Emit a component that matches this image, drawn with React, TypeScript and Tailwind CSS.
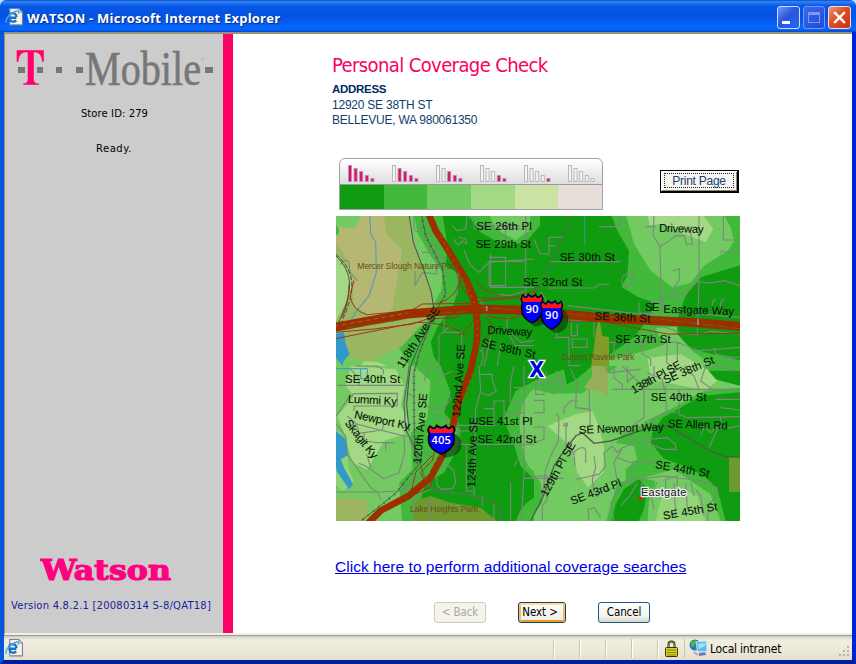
import type { ReactNode } from "react";

const SANS = "font-['Liberation_Sans',sans-serif]";
const VERDANA = "font-['DejaVu_Sans',sans-serif]";
const TAHOMA = "font-['DejaVu_Sans_Condensed','DejaVu_Sans',sans-serif]";

function IePage({ className }: { className?: string }) {
  return (
    <svg viewBox="0 0 17 17" className={className}>
      <path d="M4.500 .5H13l3.500 3.500v12h-12z" fill="#f6f3e2" stroke="#6b7fae" />
      <path d="M13 .5V4h3.500M6 15.500h9.500" fill="none" stroke="#a4a087" />
      <path d="M10.800 9.200H4.200c.1 4 4 4.600 6.400 2.600M3.800 8.400C4 3.800 10.800 3.600 10.800 8.400" fill="none" stroke="#1971cf" strokeWidth="2.200" />
      <path d="M1.500 14C-1 12 4.500 4.500 11 2.800c2-.5 2.200.8 1.400 2.400" fill="none" stroke="#43a5ee" strokeWidth="1.300" />
    </svg>
  );
}

function TMobileLogo() {
  return (
    <svg viewBox="0 -10 206 66" className="ml-[10px] h-[66px] w-[206px] shrink-0 overflow-visible">
      <g fill="#777">
        <rect x="8.500" y="19" width="7" height="6" />
        <rect x="27.500" y="19" width="6" height="6" />
        <rect x="46.500" y="19" width="6" height="6" />
        <rect x="66.500" y="19" width="6.500" height="6" />
        <rect x="195" y="19" width="8" height="6" />
      </g>
      <path d="M1.500 2h27.500v12h-2c-.5-6-2.500-9.500-7-9.500h-1V31c0 3 1 4.300 5 4.500V37H8v-1.500c3.500-.2 4.500-1.500 4.500-4.500V4.500h-2C6 4.500 4 8 3.500 14h-2z" transform="translate(0 0)" fill="#ff006c" stroke="#d9cbd1" strokeWidth=".4" />
      <text x="75" y="36.500" fontFamily="Liberation Serif, serif" fontSize="48" fill="#777" stroke="#777" strokeWidth=".5" textLength="116" lengthAdjust="spacingAndGlyphs">Mobile</text>
      <circle cx="190" cy="13" r="1" fill="none" stroke="#999" strokeWidth=".4" />
    </svg>
  );
}

function TitleBar() {
  return (
    <header className="flex h-8 shrink-0 items-center rounded-t-[6px] bg-[linear-gradient(#0842b5_0,#2a83f4_4%,#2575f3_9%,#0758e6_18%,#0551e0_50%,#0563fa_80%,#0567ff_92%,#0645cc_100%)] pl-[5px] pr-[5px]">
      <IePage className="mt-px h-[18px] w-[18px]" />
      <span className="ml-[4px] mt-[3px] whitespace-nowrap font-['Open_Sans',sans-serif] text-[13px] font-bold leading-4 tracking-[0.22px] text-white [text-shadow:1px_1px_1px_#102880]">WATSON - Microsoft Internet Explorer</span>
      <div className="ml-auto mt-0.5 flex gap-[3px]">
        <span className="flex h-[23px] w-[23px] items-end rounded-[3px] border border-[#cbdcff] bg-[linear-gradient(135deg,#749af6,#2856dc_45%,#2467ee)] pb-1 pl-[4px]">
          <i className="h-[3px] w-2 bg-white" />
        </span>
        <span className="flex h-[23px] w-[22px] items-center justify-center rounded-[3px] border border-[#7198f4] bg-[linear-gradient(135deg,#3b68e7,#1e4bdb)]">
          <i className="h-[11px] w-3 border border-t-[3px] border-[#7b98ed]" />
        </span>
        <span className="flex h-[23px] w-[23px] items-center justify-center rounded-[3px] border border-[#f4dcda] bg-[linear-gradient(135deg,#ee957e,#df4c24_45%,#c73510)]">
          <svg viewBox="0 0 14 14" className="h-[15px] w-[15px]"><path d="M2 2l10 10M12 2L2 12" stroke="white" strokeWidth="2.300" /></svg>
        </span>
      </div>
    </header>
  );
}

function Sidebar() {
  return (
    <aside className="flex w-[228px] shrink-0 flex-col border-r-[10px] border-[#ff0066] bg-[#cccccc] pt-1">
      <div className="-ml-[5px]"><div className="pl-[5px]"><TMobileLogoFrame /></div></div>
      <div className={`mt-[2px] pl-px text-center text-[10px] leading-4 tracking-[0.1px] text-black ${VERDANA}`}>Store ID: 279</div>
      <div className={`mt-[19px] text-center text-[10px] leading-4 tracking-[0.5px] text-black ${VERDANA}`}>Ready.</div>
      <svg viewBox="0 0 136 36" className="ml-[35px] mt-auto h-9 w-[136px]">
        <text x="1" y="27.500" fontFamily="DejaVu Serif, serif" fontWeight="bold" fontSize="28" fill="#ff0080" stroke="#ff0080" strokeWidth="1.200" textLength="130" lengthAdjust="spacingAndGlyphs">Watson</text>
      </svg>
      <div className={`mb-[19px] mt-[10px] whitespace-nowrap pl-[6px] text-[10px] leading-4 tracking-[0.210px] text-[#1c1c9c] ${VERDANA}`}>Version 4.8.2.1 [20080314 S-8/QAT18]</div>
    </aside>
  );
}

function TMobileLogoFrame() {
  return (
    <svg viewBox="0 -10 212 66" className="ml-[10px] h-[66px] w-[212px] shrink-0 overflow-visible">
      <g fill="#777">
        <rect x="3" y="19" width="7" height="6" />
        <rect x="22" y="19" width="6" height="6" />
        <rect x="41" y="19" width="6" height="6" />
        <rect x="61" y="19" width="7" height="6" />
        <rect x="190" y="19" width="8" height="6" />
      </g>
      <path d="M1.500 2h27.500v12h-2c-.5-6-2.500-9.500-7-9.500h-1V31c0 3 1 4.300 5 4.500V37H8v-1.500c3.500-.2 4.500-1.500 4.500-4.500V4.500h-2C6 4.500 4 8 3.500 14h-2z" fill="#ff006c" stroke="#d9cbd1" strokeWidth=".4" />
      <text x="70" y="36.500" fontFamily="Liberation Serif, serif" fontSize="48" fill="#777" stroke="#777" strokeWidth=".6" textLength="116" lengthAdjust="spacingAndGlyphs">Mobile</text>
      <circle cx="187.500" cy="11" r="1" fill="none" stroke="#999" strokeWidth=".4" />
    </svg>
  );
}

const LEGEND = ["bg-[#109c10]", "bg-[#42b93a]", "bg-[#73c962]", "bg-[#a3d885]", "bg-[#cbe2a4]", "bg-[#e7ded9]"];
const BAR_HEIGHTS = [16, 13, 10, 6, 3];

function SignalLegend() {
  return (
    <div className="h-[52px] w-[264px] overflow-hidden rounded-t-[6px] border-[1.500px] border-[#a2a2a2] bg-[linear-gradient(#fff,#ddd_52%)]">
      <svg viewBox="0 0 262 25" className="h-[25px] w-[262px]">
        {LEGEND.map((_, level) =>
          BAR_HEIGHTS.map((h, bar) => {
            const filled = bar >= level;
            return (
              <rect key={`${level}-${bar}`} x={8.500 + level * 44 + bar * 5.600} y={22.500 - h} width="3" height={h} fill={filled ? "#dd0872" : "#f3f3f3"} stroke={filled ? "#b399a7" : "#b4b4b4"} strokeWidth=".9" />
            );
          }),
        )}
      </svg>
      <div className="flex h-[25px] border-t border-[#999]">
        {LEGEND.map((color) => <span key={color} className={`flex-1 ${color}`} />)}
      </div>
    </div>
  );
}

function Terrain() {
  return (
    <>
      <rect width="1224" height="930" fill="#109c10" />
      <g>
        <path d="M0 0H325L340 90 335 155 375 180 370 230 360 270 310 340 290 385 300 430 320 456H0z" fill="#42b93a" />
        <path d="M0 0H240L252 60 290 125 325 175 322 230 293 280 275 330 210 360 195 400 225 456H0z" fill="#73c962" />
        <path d="M90 0H222L250 110 295 240 285 295 270 325 205 395 110 440 40 430 30 360 0 350 0 45 30 52 60 48z" fill="#9cb560" />
        <path d="M0 35L60 45 85 0H148L158 60 205 108 175 285 130 320 60 275 55 190 30 120 0 80z" fill="#b5b872" />
        <path d="M0 120C45 150 65 210 40 260L0 330z" fill="#a3d885" />
        <path d="M0 30C20 40 20 65 0 65z" fill="#42b93a" />
        <path d="M80 456L90 442 130 443 160 456z" fill="#a3d885" />
        <path d="M400 0L440 55 510 95 575 85 618 35V0z" fill="#42b93a" />
        <path d="M465 0L485 45 545 78 585 50 590 0z" fill="#73c962" />
        <path d="M0 360L30 355 35 390 47 420 30 440 25 456 5 430z" fill="#3099ca" />
      </g>
      <g transform="translate(600 0)">
        <path d="M230 0L250 50 285 110 280 185 262 218 310 248 365 268 335 325 300 370 230 420 180 470H624V440L470 405 425 360 430 315 455 245 500 190 624 152V0z" fill="#42b93a" />
        <path d="M275 0L300 90 350 170 415 220 470 207 510 155 582 110 600 80 590 40 568 0z" fill="#73c962" />
        <path d="M340 0L347 34 380 30 450 60 515 85 538 45 505 0z" fill="#a3d885" />
        <path d="M365 342L430 338 430 360 480 415 540 456H180C230 430 320 420 395 390L375 365z" fill="#73c962" />
        <path d="M195 310L205 365 225 370 225 456H172L188 340z" fill="#829c2a" />
        <path d="M152 0V94" stroke="#3e90a0" strokeWidth="3" />
      </g>
      <g transform="translate(0 456)">
        <path d="M0 0H320L350 80 330 140 375 190 370 250 330 320 275 350 240 465H0z" fill="#42b93a" />
        <path d="M0 0H240L290 45 280 160 230 200 235 310 195 350 205 465H0z" fill="#73c962" />
        <path d="M50 0L35 60 60 90 10 150 30 200 55 290 100 310 150 225 210 205 225 165 200 120 212 60 185 10z" fill="#a3d885" />
        <path d="M0 185L22 205 25 250 40 265 45 310 60 345 25 375 0 350z" fill="#a3d885" opacity=".6" />
        <path d="M0 190L35 220 42 268 20 280 30 305 57 355 45 370 8 315 0 255z" fill="#3099ca" />
        <path d="M0 8H100V38H80V8" fill="none" stroke="#3099ca" strokeWidth="3" />
        <path d="M600 45L545 75 508 160 535 220 560 300 600 340 670 390 740 300 690 10z" fill="#42b93a" />
        <path d="M600 70C555 100 550 180 565 240C570 290 585 310 610 320z" fill="#73c962" />
        <path d="M0 395L98 400 107 465H0z" fill="#9cb560" />
        <path d="M235 465L240 405 290 390 350 410 440 425 495 470z" fill="#6e992f" />
        <path d="M545 470C560 410 600 390 640 380V470z" fill="#42b93a" />
      </g>
      <g transform="translate(600 456)">
        <path d="M180 0H390L620 60V465H0V68L55 78 120 62z" fill="#73c962" />
        <path d="M0 60L60 72 120 45 175 0H250L145 82 55 83 0 70z" fill="#42b93a" />
        <path d="M624 65L510 75 410 130 335 172 265 205 245 230 300 240 310 280 275 310 275 350 420 310 485 355 530 385 560 465H624z" fill="#42b93a" />
        <path d="M624 78L500 90 440 125 385 155 355 200 350 230 390 278 450 300 510 330 550 368 575 465H624z" fill="#109c10" />
        <path d="M250 350L315 335 365 345 345 405 340 470H215z" fill="#42b93a" />
        <path d="M315 338L340 370 330 430 312 470H232L245 415 270 370z" fill="#109c10" />
        <path d="M350 465L370 370 425 330 480 360 525 400 545 470z" fill="#73c962" />
        <path d="M365 465L385 380 440 365 490 390 515 465z" fill="#a3d885" opacity=".7" />
        <path d="M40 180L125 145 175 135 195 180 210 245 208 320 162 364 130 320 108 240z" fill="#a3d885" />
        <path d="M340 -25L440 -35 520 10 550 45 515 72 460 62 350 40z" fill="#a3d885" />
        <path d="M172 0H220L222 90 200 78 150 65 175 30z" fill="#98ad57" />
        <path d="M585 275H624V378H585z" fill="#6e992f" />
        <path d="M0 325L20 350 25 410 0 445z" fill="#42b93a" />
      </g>
    </>
  );
}

function MinorRoads() {
  return (
    <g fill="none" stroke="#7b887b" strokeWidth="3.300">
      <path d="M107 0L110 60 125 85 127 175 105 245 65 295 48 325" stroke="#5b98ad" />
      <path d="M18 152Q35 130 45 145L48 175 70 200M240 0V45Q255 65 265 40V5M265 115H285V95H308V180L265 175 243 215V172M320 290H330V355H383V440M370 245V180M400 0L395 45 370 50 355 35M360 75Q370 105 385 80Q405 100 395 75L375 70M390 108L410 155 435 175 465 145 600 135M465 130H515V215H465V142H568M420 0V45H600M515 20V85M575 0V260M435 35H560M470 120V220H600M330 180V130H300M265 75L285 60 320 75M420 240L455 280V310M520 310L518 350 545 395H600M480 240L525 245 570 232M440 456Q455 420 440 410L465 390M315 456V365L350 335M470 372L450 456M500 390L490 456M530 356L560 385 600 380" />
      <g transform="translate(600 0)">
        <path d="M110 0L108 20 20 215 0 235" stroke="#526c52" />
        <path d="M0 75L18 120H45V70H85M45 95H65M195 38H255L262 0M50 143H260M335 38H365M360 0L358 65 378 97 382 295M378 97L400 85 425 65 450 65 458 92 475 90 470 55M495 0L495 205 490 360M568 0V78H618M560 118Q560 105 575 115H618M275 220L263 205 265 190 290 170 300 180 295 205 275 220M415 170 437 165 435 200 420 220 422 245M382 295L385 248 440 245 465 225 490 203 530 207 570 200 618 215M40 222H180L195 212 225 210M315 265V290L320 298H360M350 265H380V300M535 285V265L545 255M560 290V265L570 255M20 235L45 270M67 320V370H105V455H140M110 320H180V370M112 328V365H130V330M115 375V400H160V375H110M180 320L365 330 450 360 490 362 530 352 618 360M362 335V385M225 385H430L495 410 618 400M240 385V435M285 390L280 440M320 385L325 420 350 435 350 456M400 385 398 445 415 460M430 385V440M540 400L545 420 590 430H618M595 430V456M100 275L360 305M440 295L618 310" />
      </g>
      <g transform="translate(0 456)">
        <path d="M10 58H210M50 10L75 38V58M65 0H130L148 12V25M0 160L40 100 60 83 190 82V120M60 135V120H190M0 165L35 210 40 265 110 365 130 378 200 375 260 330M40 150L70 175 210 210 212 260 195 320 150 338 95 300 75 292M35 175 70 182 75 202 145 192 150 170M90 200V225L120 228M155 230V255M120 230H182M98 265L110 305M205 210H225L235 245 265 255 285 270 280 300M0 378H130L140 400M285 0 270 45M310 0L325 30 355 15M340 70 350 100 330 125 300 130 275 120M210 75L235 90M300 150H335L340 180M355 150Q385 180 375 230L360 250M370 178H480V128H450M370 195H425M370 235H600M435 0L440 75 425 130 420 390M440 25H475V45L487 75 465 88 440 80M397 235V375H420M345 300H315L305 320 310 360 325 370 355 368 365 350 360 315 345 300M540 0L530 45 528 105H550V130M540 65H568M570 0V105L570 320M510 140H570M510 210H590M555 275L540 300M570 320L562 465M480 125V105H510V165M480 465V415M530 350V465M570 337H690M240 465L235 405 265 380 290 370M290 400V465M445 390V420M200 350L225 375" />
        <path d="M225 0L222 30 210 110 215 190 245 250 275 345 305 375 400 385 470 405 500 430V465" stroke="#587458" strokeWidth="4" />
      </g>
      <g transform="translate(600 456)">
        <path d="M35 15L40 50 75 45 65 12M0 50H30V85H5V50M110 10 128 50 125 125 168 130V185M0 103H30V140H0M55 85 60 63 85 65V25M166 70V135M90 145V125L110 105H130M66 142 75 155 73 225 50 270 35 310 25 390M96 170V240L120 260 123 300M90 170V180H100V170M115 265Q140 235 155 250L155 290M0 183H30V220L0 230M0 330H40V400L25 420V465M128 340 195 325 215 300 210 260 235 240M180 380 175 340 185 305 180 270M265 0 315 50 330 55V155L300 175 270 200M235 70H618M360 0V45M330 90V70M393 60 398 135M435 70V145L460 155 618 152M330 170 400 135 430 140M235 240 250 260 265 245 340 220 400 215 425 235 425 250 390 250 350 235 340 215M290 215V235M250 345 240 290 265 245M250 275 290 290 320 285 370 290M240 465 230 410 270 350 310 340 390 330 500 345 550 365 548 390 525 415 520 465M275 350 290 330 295 295M310 350 290 385 260 420M325 345 320 380M370 350 350 380 360 430M395 370V340L430 330V360M420 350 425 450M455 350 460 430M470 350 480 390M485 370 500 390 510 450M165 465 162 430 180 425 200 455M190 395V380L240 365M485 180H510L530 200 550 180M555 180 525 245M510 185 500 210M560 155V190L618 180M545 100H618M560 125 618 132M450 0 480 30 495 70M515 0 500 45 535 70M530 0 618 15M210 0 225 20 320 10M240 0V35L265 55V70M280 0V50M300 30 280 50M340 20 385 40 390 70" />
        <path d="M-10 465L28 390 60 300 90 255 125 210 145 200 180 232 230 225 345 185 400 180 445 205 530 255 575 272H624" stroke="#505b50" strokeWidth="4" />
      </g>
    </g>
  );
}

function Highways() {
  return (
    <>
      <g fill="none" stroke="#484d48" strokeWidth="3">
        <path d="M225 0L238 85 270 170 292 235 300 290 280 345 255 395 230 456 225 490 218 570 225 650M0 120C65 180 55 235 12 330" />
        <path d="M262 0L275 65 325 165 335 240 300 300 255 420 240 475 240 590 242 710 252 755 185 838 82 920" stroke="#575e57" />
        <path d="M262 0L275 65 325 165 335 240 300 300 255 420 240 475 240 590 242 710 252 755 185 838 82 920" strokeWidth="8" strokeDasharray="2 18" />
        <path d="M5 120C72 180 63 235 20 330" strokeDasharray="14 6" />
      </g>
      <g fill="none" stroke="#9b3817" strokeWidth="3">
        <path d="M25 310Q45 265 45 210M60 200L48 245Q55 290 100 302L230 290 265 270 420 268M0 355L120 345 235 330 280 315 370 310 390 285M345 95Q390 180 410 268M355 120Q370 210 405 250 560 260 605 225M380 180Q380 245 310 270M425 200Q440 230 500 245M425 310Q405 345 375 365M400 370Q355 325 250 325L0 375M450 305Q500 340 440 385M460 305Q525 325 570 300L650 310M0 345Q100 320 220 300L410 275 620 285M435 260 580 250 610 230M270 800L260 775 295 740 305 695M230 840 245 775 295 725M245 840 290 820 295 770M600 320 800 322 1000 360 1218 358" />
      </g>
      <g fill="none" stroke="#9c2e00">
        <path d="M0 340L110 320 220 300 410 285 550 288 850 315 1070 325 1224 337" strokeWidth="27" />
        <path d="M284 0L305 50 350 120 395 195 420 250 430 330 428 385 410 470 375 560 355 640 325 725 290 790 225 845 140 890 100 930" strokeWidth="20" />
        <path d="M0 337L110 317 220 297" stroke="#819246" strokeWidth="2" strokeDasharray="15 9" />
        <path d="M430 279 600 292 840 310M440 303 700 305M40 342 200 318M280 300 400 293M940 311 1218 344" stroke="#5a7719" strokeWidth="2" strokeDasharray="32 10" />
        <path d="M320 65 410 240 428 280 431 400M415 480 345 680 280 790 195 850" stroke="#c75e29" strokeWidth="2" strokeDasharray="8 12" />
      </g>
      <circle cx="425" cy="285" r="17" fill="#9c2e00" />
      <path d="M458 276v16M1092 315v18" stroke="#8991a0" strokeWidth="5" />
    </>
  );
}

function Shield({ x, y, route, scale = 1 }: { x: number; y: number; route: string; scale?: number }) {
  return (
    <g transform={`translate(${x} ${y})`}>
      <g transform={`scale(${scale} 1)`}>
        <path d="M-14 -25Q50 -28 49 15Q49 52 8 55L-20 30z" fill="#052e05" opacity=".55" />
        <path d="M-28-40L-20-33Q-14-33-11-42Q0-30 11-42Q14-33 20-33L28-40L33-28 29-17Q40 25 0 44Q-40 25-29-17L-33-28z" fill="#0000f6" stroke="#000" strokeWidth="4" />
        <path d="M-28-36L-20-30Q-13-29-11-37Q0-26 11-37Q13-29 20-30L28-36 30-27 27-19H-27L-30-27z" fill="#ff1515" />
      </g>
      <text x="0" y="14" textAnchor="middle" fontFamily="DejaVu Sans, sans-serif" fontSize="31" fill="white" stroke="white" strokeWidth=".7">{route}</text>
    </g>
  );
}

type MapLabel = [text: string, x: number, y: number, width: number, angle?: number];

const STREETS: MapLabel[] = [
  ["SE 26th Pl", 427, 49, 166],
  ["SE 29th St", 425, 103, 166],
  ["SE 30th St", 677, 142, 166],
  ["SE 32nd St", 568, 217, 177],
  ["Driveway", 975, 53, 133, 2],
  ["Driveway", 460, 359, 134, 3],
  ["SE 38th St", 440, 397, 166, 13],
  ["SE", 933, 291, 43],
  ["Eastgate Way", 988, 296, 212, 2],
  ["SE 36th St", 781, 317, 168, 3],
  ["SE 37th St", 844, 388, 166],
  ["118th Ave SE", 206, 464, 208, -57],
  ["122nd Ave SE", 378, 610, 219, -86],
  ["120th Ave SE", 261, 749, 211, -85],
  ["124th Ave SE", 423, 820, 210, -88],
  ["SE 40th St", 33, 508, 166],
  ["Lummi Ky", 41, 566, 147, 3],
  ["Newport Ky", 59, 612, 171, 12],
  ["Skagit Ky", 31, 628, 138, 52],
  ["SE 41st Pl", 433, 633, 162],
  ["SE 42nd St", 431, 688, 176],
  ["138th Pl SE", 899, 540, 166, -29],
  ["SE 38th St", 994, 510, 162, -23],
  ["SE 40th St", 950, 562, 168],
  ["SE Newport Way", 735, 659, 254, -2],
  ["SE Allen Rd", 1001, 640, 180, 2],
  ["129th Pl SE", 638, 850, 181, -61],
  ["SE 43rd Pl", 715, 873, 160, -21],
  ["SE 44th St", 962, 762, 164, 10],
  ["SE 45th St", 989, 917, 165, -10],
];

const PARKS: MapLabel[] = [
  ["Mercer Slough Nature Park", 70, 165, 304],
  ["Sunset Ravine Park", 682, 439, 219],
  ["Lake Heights Park", 228, 894, 204],
];

function CoverageMap() {
  return (
    <svg viewBox="6 6 1212 915" className="mt-[6px] ml-1 h-[305px] w-[404px] shrink-0">
      <Terrain />
      <MinorRoads />
      <Highways />
      <g fontFamily="Liberation Sans, sans-serif" fontSize="26" fill="#6c4a20">
        {PARKS.map(([text, x, y, width]) => <text key={text} x={x} y={y} textLength={width}>{text}</text>)}
      </g>
      <g fontFamily="Liberation Sans, sans-serif" fontSize="34" fill="#071407" stroke="#071407" strokeWidth=".3">
        {STREETS.map(([text, x, y, width, angle = 0]) => (
          <text key={`${text}-${x}`} x={x} y={y} textLength={width} transform={`rotate(${angle} ${x} ${y})`}>{text}</text>
        ))}
      </g>
      <Shield x={594} y={283} route="90" />
      <Shield x={653} y={302} route="90" />
      <Shield x={322} y={676} route="405" scale={1.23} />
      <text x="586" y="490" fontFamily="DejaVu Sans Condensed, DejaVu Sans, sans-serif" fontSize="64" fill="#0000e8" stroke="white" strokeWidth="8" paintOrder="stroke" textLength="45" lengthAdjust="spacingAndGlyphs" fontWeight="bold">X</text>
      <circle cx="920" cy="853" r="6" fill="#ff1010" />
      <text x="921" y="847" fontFamily="Liberation Sans, sans-serif" fontSize="33" fill="#101010" stroke="#eee" strokeWidth="7" strokeLinejoin="round" paintOrder="stroke" textLength="136">Eastgate</text>
    </svg>
  );
}

function XpButton({ children, variant = "normal" }: { children: ReactNode; variant?: "normal" | "disabled" | "default" }) {
  const styles = {
    normal: "w-[52px] border-[#225783] bg-[linear-gradient(#fff,#f3f2ec_70%,#d9d4c7)] text-black",
    disabled: "w-[52px] border-[#cfccbb] bg-[#f5f4ea] text-[#aaa99a]",
    default: "w-[48px] border-[#153f70] bg-[linear-gradient(#fff,#edebe3)] pr-1 text-black shadow-[inset_0_2px_0_#ffdc8f,inset_2px_0_0_#f8bd51,inset_-2px_0_0_#f8bd51,inset_0_-2px_0_#e99a16]",
  };
  return <button disabled={variant === "disabled"} className={`flex h-[21px] items-center justify-center whitespace-nowrap rounded-[3px] border text-[11.500px] leading-4 tracking-[-0.1px] ${TAHOMA} ${styles[variant]}`}>{children}</button>;
}

function StatusBar() {
  return (
    <footer className="flex h-[25px] shrink-0 items-center border-t border-[#9d9b8c] bg-[linear-gradient(#cfccc0_0,#f0eee0_4px,#ece9d8_60%,#e3dfcb)]">
      <IePage className="ml-px h-[18px] w-[18px]" />
      <div className="ml-auto flex h-[19px]">
        {[0, 1, 2, 3, 4].map((n) => <span key={n} className={`border-l border-[#c8c5b2] shadow-[inset_1px_0_0_#fff] ${n < 4 ? "w-[26px]" : "w-[3px]"}`} />)}
      </div>
      <svg viewBox="0 0 15 17" className="ml-[4px] h-[17px] w-[15px]">
        <path d="M4.500 8V4.500a3 3 0 016 0V8" fill="none" stroke="#252515" strokeWidth="2" />
        <path d="M4.500 8V4.500a3 3 0 016 0V8" fill="none" stroke="#d0d04b" strokeWidth=".6" />
        <rect x="1.500" y="7.500" width="12" height="9" rx="1" fill="#d8d020" stroke="#34350b" />
        <path d="M3 10h9M3 12.500h9M3 15h9" stroke="#85810c" />
      </svg>
      <span className="ml-[5px] h-[19px] border-l border-[#c8c5b2]" />
      <svg viewBox="0 0 19 18" className="ml-[4px] h-[18px] w-[19px]">
        <circle cx="6" cy="6" r="5.500" fill="#2775ce" /><path d="M2 3l4-2 3 2-3 2-1 3-3-1zM7 7l4-2-1 4-3 2z" fill="#47ba31" />
        <path d="M7 3l10-1 1 10-9 1z" fill="#55bceb" stroke="#cbdff1" /><path d="M9 5l7-1v3l-6 3z" fill="#a4e4fb" />
        <path d="M10 14l6-1 1 3-7 1z" fill="#7376b7" /><path d="M5 13l4 3" stroke="#b4a3d6" strokeWidth="2" />
      </svg>
      <span className={`ml-[2px] mt-px w-[128px] whitespace-nowrap text-[12px] leading-4 tracking-[-0.220px] text-black ${TAHOMA}`}>Local intranet</span>
      <svg viewBox="0 0 14 14" className="mt-2 h-3.5 w-3.5" fill="#b9b5a1"><path d="M9 1h2v2H9zM5 5h2v2H5zM9 5h2v2H9zM1 9h2v2H1zM5 9h2v2H5zM9 9h2v2H9z" /></svg>
    </footer>
  );
}

export default function App() {
  return (
    <div className={`flex h-[664px] w-[856px] flex-col overflow-hidden bg-[#c7daf8] ${SANS}`}>
      <TitleBar />
      <div className="flex min-h-0 flex-1 flex-col border-b-4 border-l-[4px] border-r-4 border-b-[#001ea0] border-l-[#0754df] border-r-[#0026cb]">
        <div className="flex min-h-0 flex-1 border-b-2 border-l border-t-2 border-[#99917e] border-b-[#f2f0e5] bg-white">
          <Sidebar />
          <main className="flex min-w-0 flex-1 flex-col bg-white pl-[99px] pt-[17px]">
            <h1 className={`whitespace-nowrap text-[20px] leading-7 tracking-[-0.6px] text-[#f80064] ${TAHOMA}`}>Personal Coverage Check</h1>
            <address className="mt-[3px] text-[12px] not-italic leading-[15.500px] tracking-[-0.230px] text-[#123d6e]">
              <strong className="block text-[11.500px] tracking-[-0.3px] text-[#002b60]">ADDRESS</strong>
              12920 SE 38TH ST<br />BELLEVUE, WA 980061350
            </address>
            <div className="mt-[29px] flex pl-[7px]">
              <SignalLegend />
              <button className="ml-[57px] mt-3 flex h-[23px] w-[79px] items-center justify-center whitespace-nowrap border border-b-2 border-r-2 border-black bg-[#f7f6f0] text-[12px] tracking-[-0.250px] text-[#153e70] shadow-[inset_1px_1px_0_#fff,inset_-1px_-1px_0_#8d8976]">
                <span className="flex h-[15px] w-[70px] items-center justify-center border border-dotted border-[#222]">Print Page</span>
              </button>
            </div>
            <CoverageMap />
            <a href="#coverage" className="ml-[3px] mt-[36px] w-max whitespace-nowrap text-[15.500px] leading-5 tracking-[0.030px] text-[#0000e8] underline">Click here to perform additional coverage searches</a>
            <div className="ml-[102px] mt-[25px] flex">
              <XpButton variant="disabled">&lt; Back</XpButton>
              <div className="ml-8"><XpButton variant="default">Next &gt;</XpButton></div>
              <div className="ml-[32px]"><XpButton>Cancel</XpButton></div>
            </div>
          </main>
        </div>
        <StatusBar />
      </div>
    </div>
  );
}
